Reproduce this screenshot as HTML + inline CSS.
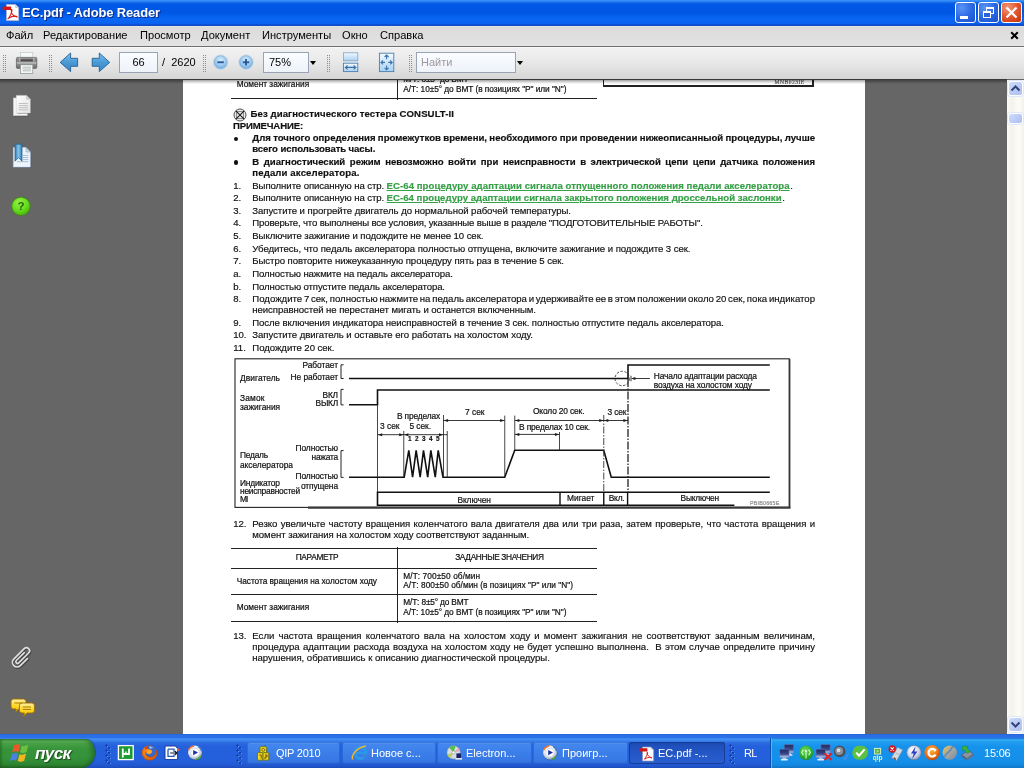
<!DOCTYPE html>
<html>
<head>
<meta charset="utf-8">
<title>EC.pdf - Adobe Reader</title>
<style>
*{box-sizing:border-box;margin:0;padding:0}
html,body{width:1024px;height:768px;overflow:hidden;background:#666;font-family:"Liberation Sans",sans-serif;-webkit-font-smoothing:antialiased;}
body>*{will-change:transform}
.abs{position:absolute}
svg{overflow:visible}
#titlebar{position:absolute;left:0;top:0;width:1024px;height:26px;
 background:linear-gradient(to bottom,#3a96ff 0%,#2d86f6 5%,#0d62e4 11%,#0058e6 18%,#0057e3 50%,#0560ee 62%,#0b66f4 75%,#0a62f0 90%,#0852dc 94%,#0340b8 97.5%,#5a78d0 100%);}
#title{position:absolute;left:22px;top:4px;color:#fff;font-weight:bold;font-size:13px;line-height:18px;white-space:nowrap;text-shadow:1px 1px 0 #0a2a8a;letter-spacing:-0.15px}
.wbtn{position:absolute;top:2px;width:21px;height:21px;border:1px solid #fff;border-radius:3px;
 background:radial-gradient(circle at 30% 25%,#5a94f4 0%,#2a66e2 55%,#1a4fcf 100%);}
#bclose{background:radial-gradient(circle at 30% 25%,#f09a7a 0%,#e2562e 50%,#c5330c 100%);}
#menubar{position:absolute;left:0;top:26px;width:1024px;height:21px;background:linear-gradient(to bottom,#e8e6ea 0,#dddcdc 6%,#dedede 50%,#e3e3e3 100%);border-bottom:1px solid #707070;}
.mi{position:absolute;top:28.4px;font-size:11.1px;line-height:14px;color:#000;white-space:nowrap}
#toolbar{position:absolute;left:0;top:47px;width:1024px;height:32px;background:linear-gradient(to bottom,#f1f1f1 0%,#ebebeb 35%,#e0e0e0 70%,#d5d5d5 100%);border-top:1px solid #f8f8f8;}
#tbshadow{position:absolute;left:0;top:79px;width:1007px;height:5px;background:linear-gradient(to bottom,rgba(0,0,0,.5) 0,rgba(0,0,0,.34) 25%,rgba(0,0,0,.2) 50%,rgba(0,0,0,.08) 78%,rgba(0,0,0,0) 100%);}
.tbox{position:absolute;top:52px;height:21px;border:1px solid #98a4b4;background:linear-gradient(to bottom,#fafcff,#eef3fa);font-size:11px;line-height:19px;color:#000;white-space:nowrap}
.grip{position:absolute;top:55px;width:4px;height:17px;background-image:linear-gradient(to right,#8e8e8e 0,#8e8e8e 1px,transparent 1px,transparent 2.5px,#8e8e8e 2.5px,#8e8e8e 3.5px,transparent 3.5px);-webkit-mask-image:repeating-linear-gradient(to bottom,#000 0,#000 1px,transparent 1px,transparent 2px);}
.tt{position:absolute;font-size:11px;line-height:14px;white-space:nowrap;color:#000}
.dd{position:absolute;width:0;height:0;border-left:3.5px solid transparent;border-right:3.5px solid transparent;border-top:4px solid #000}
#main{position:absolute;left:0;top:80px;width:1007px;height:654px;background:#666;overflow:hidden}
#page{position:absolute;left:183px;top:0;width:682px;height:654px;background:#fff;}
.t{position:absolute;white-space:pre;color:#101010;margin-top:-80px;-webkit-text-stroke-width:0.16px}
.lnk{text-decoration:underline;text-decoration-thickness:1px;text-underline-offset:1.2px}
.hl{position:absolute;height:1.2px;background:#222;margin-top:-80px}
.vl{position:absolute;width:1.2px;background:#222;margin-top:-80px}
#vscroll{position:absolute;left:1007px;top:80px;width:17px;height:654px;background:linear-gradient(to right,#fbfbf6,#f4f3ea 30%,#fdfdf9 70%,#f3f2ea);}
.sbtn{position:absolute;left:1008px;width:15px;height:15px;border:1px solid #fff;border-radius:3px;background:linear-gradient(135deg,#cfdcfb,#b8c9f5 60%,#aebff0);box-shadow:0 0 0 1px #dfe7fb}
#wbottom{position:absolute;left:0;top:734px;width:1024px;height:4px;background:linear-gradient(to bottom,#2360d2 0,#2a6ee6 30%,#2b71e9 100%);}
#taskbar{position:absolute;left:0;top:738px;width:1024px;height:30px;
 background:linear-gradient(to bottom,#3a84ee 0%,#418cf2 5%,#3a82ec 9%,#2b6ae0 16%,#2560dc 28%,#2560dc 75%,#2259d2 90%,#1c4cbc 100%);}
#start{position:absolute;left:0;top:739px;width:95px;height:29px;border-radius:0 10px 14px 0/0 14px 16px 0;
 background:linear-gradient(to bottom,#3c8a3c 0%,#5cae5a 7%,#46a044 16%,#37943a 35%,#35923a 65%,#2e8532 88%,#246c28 100%);box-shadow:1px 0 1px #1d48a8, inset -3px 0 4px rgba(20,80,20,.5), inset 2px 0 2px rgba(20,80,20,.35)}
#startt{position:absolute;left:34.5px;top:742.3px;font-size:17.2px;line-height:22px;font-weight:bold;font-style:italic;color:#fff;text-shadow:1px 1px 1px #1a4a1a;letter-spacing:-0.7px}
#tray{position:absolute;left:770px;top:738px;width:254px;height:30px;
 background:linear-gradient(to bottom,#1a72d0 0%,#35abf5 6%,#1f9bf0 14%,#1592ec 30%,#1590ea 70%,#138ae2 88%,#0f76c8 100%);border-left:1px solid #0e50b0;box-shadow:inset 1px 0 0 #4ab8f8}
.tk{position:absolute;top:742px;height:22px;border-radius:3px;background:linear-gradient(to bottom,#6aa4f4 0%,#4387ee 10%,#3b7ee9 50%,#3878e4 85%,#2f6cd8 100%);box-shadow:inset 0 0 0 1px rgba(30,90,200,.55);color:#fff;font-size:11px;line-height:22px;white-space:nowrap;overflow:hidden}
.tk b{position:absolute;left:29px;top:0;font-weight:normal}
.tk.act{background:linear-gradient(to bottom,#1a45a8 0%,#1f4fba 15%,#2558c8 60%,#2a5ed0 100%);box-shadow:inset 0 0 0 1px #173d98}
.ql{position:absolute;top:744px;width:18px;height:18px}
.dots{position:absolute;top:744px;width:6px;height:20px;background-image:radial-gradient(circle at 1.5px 1.5px,#1840b0 1px,transparent 1.4px),radial-gradient(circle at 4.2px 4px,#1840b0 1px,transparent 1.4px),radial-gradient(circle at 2.3px 2.3px,#5a98f4 0.9px,transparent 1.3px),radial-gradient(circle at 5px 4.8px,#5a98f4 0.9px,transparent 1.3px);background-size:6px 5px}
.ti{position:absolute;top:745px;width:16px;height:16px}
</style>
</head>
<body>
<!-- TITLE BAR -->
<div id="titlebar"></div>
<svg class="abs" style="left:2px;top:3px" width="20" height="20" viewBox="0 0 20 20">
<path d="M4.5 1.6 H13.6 L16.6 4.6 V17.6 H4.5 Z" fill="#fff" stroke="#b8b8c8" stroke-width="0.7"/>
<path d="M13.6 1.6 V4.6 H16.6 Z" fill="#d8d8e0" stroke="#a8a8b8" stroke-width="0.5"/>
<rect x="0.6" y="3.4" width="8.6" height="3.6" rx="0.6" fill="#d41818"/>
<path d="M6.6 15.2 C8.4 12.6 9.8 9.6 10 7.4 C10.1 6.4 9.2 6.4 9.2 7.5 C9.4 10 11.6 13 14.4 14 C15.4 14.3 15.4 13.3 14.2 13.2 C11.6 13 8.6 13.8 6.4 15.4 C5.6 16 6 16 6.6 15.2 Z" fill="none" stroke="#d42020" stroke-width="1.1"/>
</svg>
<div id="title">EC.pdf - Adobe Reader</div>
<div class="wbtn" id="bmin" style="left:955px"><i class="abs" style="left:4px;top:13px;width:8px;height:3px;background:#fff"></i></div>
<div class="wbtn" id="bmax" style="left:978px"><i class="abs" style="left:7px;top:4px;width:8px;height:7px;border:1px solid #fff;border-top-width:2px"></i><i class="abs" style="left:4px;top:8px;width:8px;height:7px;border:1px solid #fff;border-top-width:2px;background:#2a62dc"></i></div>
<div class="wbtn" id="bclose" style="left:1001px"><svg class="abs" style="left:0;top:0" width="19" height="19"><path d="M4.5 4.5 L14.5 14.5 M14.5 4.5 L4.5 14.5" stroke="#fff" stroke-width="2.2" stroke-linecap="butt"/></svg></div>
<!-- MENU -->
<div id="menubar"></div>
<div class="mi" style="left:6px">Файл</div>
<div class="mi" style="left:43px">Редактирование</div>
<div class="mi" style="left:140px">Просмотр</div>
<div class="mi" style="left:201px">Документ</div>
<div class="mi" style="left:262px">Инструменты</div>
<div class="mi" style="left:342px">Окно</div>
<div class="mi" style="left:380px">Справка</div>
<svg class="abs" style="left:1010px;top:31px" width="9" height="9"><path d="M1.2 1.2 L7.8 7.8 M7.8 1.2 L1.2 7.8" stroke="#000" stroke-width="2"/></svg>
<!-- TOOLBAR -->
<div id="toolbar"></div>
<div class="grip" style="left:3px"></div>
<div class="grip" style="left:49px"></div>
<div class="grip" style="left:203px"></div>
<div class="grip" style="left:327px"></div>
<div class="grip" style="left:409px"></div>
<svg class="abs" style="left:0;top:46px" width="540" height="34" viewBox="0 46 540 34">
<defs>
<linearGradient id="gArr" x1="0" y1="0" x2="0" y2="1"><stop offset="0" stop-color="#7fc0ee"/><stop offset="0.5" stop-color="#4a9ad6"/><stop offset="1" stop-color="#3a86c6"/></linearGradient>
<linearGradient id="gPr" x1="0" y1="0" x2="0" y2="1"><stop offset="0" stop-color="#9a9a9a"/><stop offset="0.35" stop-color="#777"/><stop offset="0.5" stop-color="#c8c8c8"/><stop offset="0.62" stop-color="#8a8a8a"/><stop offset="1" stop-color="#6a6a6a"/></linearGradient>
<radialGradient id="gZ" cx="0.5" cy="0.35" r="0.7"><stop offset="0" stop-color="#d8eefc"/><stop offset="0.55" stop-color="#9ccaf0"/><stop offset="1" stop-color="#6aa6dc"/></radialGradient>
<linearGradient id="gFit" x1="0" y1="0" x2="0" y2="1"><stop offset="0" stop-color="#f4faff"/><stop offset="1" stop-color="#a8d0f2"/></linearGradient>
</defs>
<!-- printer -->
<rect x="20.6" y="52.4" width="12.2" height="7.4" fill="#f4f8f6" stroke="#b8c0c0" stroke-width="0.6"/>
<rect x="16.4" y="57.4" width="20.4" height="11" rx="1.2" fill="url(#gPr)" stroke="#5a5a5a" stroke-width="0.7"/>
<rect x="20" y="59.4" width="13.4" height="1.8" fill="#4e4a4a"/>
<rect x="18.8" y="57.6" width="1.8" height="4" fill="#c8c8c8" opacity=".6"/><rect x="32.8" y="57.6" width="1.8" height="4" fill="#c8c8c8" opacity=".6"/>
<rect x="20.4" y="64.8" width="12.4" height="8.6" fill="#f2f6f4" stroke="#8a9090" stroke-width="0.7"/>
<path d="M22.6 67.2 H31 M22.6 69 H31 M22.6 70.8 H31" stroke="#a8b0ae" stroke-width="0.8"/>
<!-- arrows -->
<path d="M60.2 62.4 L70.6 53 L70.6 58.3 L77.6 58.3 L77.6 66.3 L70.6 66.3 L70.6 71.6 Z" fill="url(#gArr)" stroke="#1f5f92" stroke-width="0.9" stroke-linejoin="round"/>
<path d="M109.7 62.4 L99.3 53 L99.3 58.3 L92.2 58.3 L92.2 66.3 L99.3 66.3 L99.3 71.6 Z" fill="url(#gArr)" stroke="#1f5f92" stroke-width="0.9" stroke-linejoin="round"/>
<!-- zoom out / in -->
<circle cx="220.6" cy="62.2" r="6.6" fill="url(#gZ)" stroke="#8ab4d8" stroke-width="1"/>
<circle cx="220.6" cy="62.2" r="7.4" fill="none" stroke="#c4d8ea" stroke-width="0.7"/>
<rect x="217.4" y="61.3" width="6.4" height="1.9" fill="#2a5a9a"/>
<circle cx="246" cy="62.2" r="6.6" fill="url(#gZ)" stroke="#8ab4d8" stroke-width="1"/>
<circle cx="246" cy="62.2" r="7.4" fill="none" stroke="#c4d8ea" stroke-width="0.7"/>
<rect x="242.8" y="61.3" width="6.4" height="1.9" fill="#2a5a9a"/><rect x="245.05" y="59" width="1.9" height="6.4" fill="#2a5a9a"/>
<!-- fit width -->
<rect x="343.4" y="52.8" width="14.4" height="8" fill="url(#gFit)" stroke="#7aa4cc" stroke-width="0.8"/>
<rect x="343.4" y="63.2" width="14.4" height="8.4" fill="url(#gFit)" stroke="#4a7eb2" stroke-width="0.9"/>
<path d="M345.4 67.4 H355.8 M347.6 65.4 L345.4 67.4 L347.6 69.4 M353.6 65.4 L355.8 67.4 L353.6 69.4" fill="none" stroke="#3a6ea2" stroke-width="1.1"/>
<!-- fit page -->
<rect x="379.4" y="53.2" width="14.4" height="18.4" fill="url(#gFit)" stroke="#4a7eb2" stroke-width="0.9"/>
<path d="M386.6 55 V59.2 M384.6 57 L386.6 55 L388.6 57 M386.6 69.8 V65.6 M384.6 67.8 L386.6 69.8 L388.6 67.8 M381 62.4 H385 M383 60.4 L381 62.4 L383 64.4 M392.2 62.4 H388.2 M390.2 60.4 L392.2 62.4 L390.2 64.4" fill="none" stroke="#3a74ac" stroke-width="1.1"/>
</svg>
<div class="tbox" style="left:119px;width:39px;text-align:center">66</div>
<div class="tt" style="left:162px;top:55px">/&nbsp; 2620</div>
<div class="tbox" style="left:263px;width:46px;padding-left:5px">75%</div>
<div class="dd" style="left:310px;top:61px"></div>
<div class="tbox" style="left:416px;width:100px;padding-left:4px;color:#a09a9a">Найти</div>
<div class="dd" style="left:517px;top:61px"></div>
<!-- MAIN -->
<div id="main">
<div id="page"></div>
<!-- top cut-off table -->
<div class="hl" style="left:231px;top:98px;width:366px"></div>
<div class="vl" style="left:397px;top:78px;height:22px"></div>
<!-- top right box -->
<div class="abs" style="left:603px;top:-20px;width:211px;height:26.5px;border:1px solid #222;border-right-width:2px;border-bottom-width:2px"></div>
<!-- bottom table -->
<div class="hl" style="left:231px;top:548px;width:366px"></div>
<div class="hl" style="left:231px;top:567.6px;width:366px"></div>
<div class="hl" style="left:231px;top:593.7px;width:366px"></div>
<div class="hl" style="left:231px;top:620.8px;width:366px"></div>
<div class="vl" style="left:397px;top:547px;height:76px"></div>
<!-- bullets -->
<div class="abs" style="left:233.5px;top:56.9px;width:4.2px;height:4.2px;border-radius:50%;background:#111"></div>
<div class="abs" style="left:233.5px;top:80.4px;width:4.2px;height:4.2px;border-radius:50%;background:#111"></div>
<!-- no-consult icon -->
<svg class="abs" style="left:232.5px;top:27.5px" width="14" height="14" viewBox="0 0 14 14"><circle cx="7" cy="7" r="6" fill="#e8e8e8" stroke="#555" stroke-width="1"/><rect x="3.6" y="3.6" width="6.8" height="6.8" fill="none" stroke="#777" stroke-width="0.8"/><path d="M2.8 2.8 L11.2 11.2 M11.2 2.8 L2.8 11.2" stroke="#222" stroke-width="1.2"/></svg>
<!--LINES_END-->
<svg class="abs" style="left:0;top:-80px" width="1024" height="768" viewBox="0 0 1024 768">
<rect x="235" y="358.8" width="554.3" height="148.6" fill="none" stroke="#222" stroke-width="1.1"/>
<line x1="789.6" y1="359" x2="789.6" y2="508.2" stroke="#333" stroke-width="1.6" />
<line x1="308" y1="507.6" x2="790.4" y2="507.6" stroke="#3a3a3a" stroke-width="2.2" />
<path d="M343.6 364.8 H341 V378.5 H343.6" fill="none" stroke="#222" stroke-width="1"/>
<path d="M343.6 389.4 H341 V404.9 H343.6" fill="none" stroke="#222" stroke-width="1"/>
<path d="M343.6 450.6 H341 V477.4 H343.6" fill="none" stroke="#222" stroke-width="1"/>
<path d="M349 378.5 H628 V365 H769.8" fill="none" stroke="#111" stroke-width="1.6"/>
<path d="M349 404.8 H377.5 V390 H769.8" fill="none" stroke="#111" stroke-width="1.6"/>
<line x1="377.5" y1="405" x2="377.5" y2="492" stroke="#333" stroke-width="0.9" />
<polyline points="349,477.2 404.2,477.2 408.8,450.3 412.6,477.2 416.15000000000003,450.3 420.15000000000003,477.2 423.5,450.3 427.70000000000005,477.2 430.85,450.3 435.25,477.2 438.2,450.3 443,477.2 504.75,477.2 514.75,450.2 603.75,450.2 611.25,477.2 769.8,477.2" fill="none" stroke="#111" stroke-width="1.6" stroke-linejoin="miter"/>
<path d="M769.8 492.3 H377.5 V505.3 H734.4" fill="none" stroke="#111" stroke-width="1.6"/>
<line x1="560" y1="492.3" x2="560" y2="505.3" stroke="#111" stroke-width="1.4" />
<line x1="603.75" y1="492.3" x2="603.75" y2="505.3" stroke="#111" stroke-width="1.4" />
<line x1="627.6" y1="492.3" x2="627.6" y2="505.3" stroke="#111" stroke-width="1.4" />
<line x1="403.75" y1="431" x2="403.75" y2="477" stroke="#333" stroke-width="0.9" />
<line x1="443.5" y1="415" x2="443.5" y2="477" stroke="#333" stroke-width="0.9" />
<line x1="447.25" y1="431" x2="447.25" y2="477" stroke="#333" stroke-width="0.9" />
<line x1="504.75" y1="415.6" x2="504.75" y2="477" stroke="#333" stroke-width="0.9" />
<line x1="514.75" y1="415.6" x2="514.75" y2="450" stroke="#333" stroke-width="0.9" />
<line x1="559.5" y1="432" x2="559.5" y2="450" stroke="#333" stroke-width="0.9" />
<line x1="603.75" y1="415" x2="603.75" y2="492" stroke="#333" stroke-width="0.9" stroke-dasharray="7 1.5 1.5 1.5"/>
<line x1="628" y1="379" x2="628" y2="492" stroke="#222" stroke-width="1.3" stroke-dasharray="8 1.5 1.5 1.5"/>
<line x1="377.5" y1="434.7" x2="447.25" y2="434.7" stroke="#222" stroke-width="0.9" />
<path d="M378 434.7 L382.2 433.2 L382.2 436.2 Z" fill="#1a1a1a"/>
<path d="M403.4 434.7 L399.2 433.2 L399.2 436.2 Z" fill="#1a1a1a"/>
<path d="M404.2 434.7 L408.4 433.2 L408.4 436.2 Z" fill="#1a1a1a"/>
<path d="M443.2 434.7 L439.0 433.2 L439.0 436.2 Z" fill="#1a1a1a"/>
<line x1="443.5" y1="420.5" x2="504.75" y2="420.5" stroke="#222" stroke-width="0.9" />
<path d="M443.9 420.5 L448.09999999999997 419.0 L448.09999999999997 422.0 Z" fill="#1a1a1a"/>
<path d="M504.4 420.5 L500.2 419.0 L500.2 422.0 Z" fill="#1a1a1a"/>
<line x1="514.75" y1="420.5" x2="628" y2="420.5" stroke="#222" stroke-width="0.9" />
<path d="M515.1 420.5 L519.3000000000001 419.0 L519.3000000000001 422.0 Z" fill="#1a1a1a"/>
<path d="M603.4 420.5 L599.1999999999999 419.0 L599.1999999999999 422.0 Z" fill="#1a1a1a"/>
<path d="M604.1 420.5 L608.3000000000001 419.0 L608.3000000000001 422.0 Z" fill="#1a1a1a"/>
<path d="M627.6 420.5 L623.4 419.0 L623.4 422.0 Z" fill="#1a1a1a"/>
<line x1="514.75" y1="434.4" x2="559.5" y2="434.4" stroke="#222" stroke-width="0.9" />
<path d="M515.1 434.4 L519.3000000000001 432.9 L519.3000000000001 435.9 Z" fill="#1a1a1a"/>
<path d="M559.1 434.4 L554.9 432.9 L554.9 435.9 Z" fill="#1a1a1a"/>
<circle cx="622.2" cy="378.5" r="7.2" fill="none" stroke="#333" stroke-width="0.9" stroke-dasharray="2.4 1.6"/>
<line x1="634" y1="378.5" x2="649.8" y2="378.5" stroke="#222" stroke-width="0.9" />
<path d="M631.2 378.5 L635.4000000000001 377.0 L635.4000000000001 380.0 Z" fill="#1a1a1a"/>
<line x1="631" y1="375.8" x2="631" y2="381.2" stroke="#222" stroke-width="0.9" />
</svg>
<div class="t" style="left:236.75px;top:78.92px;font-size:8.3px;line-height:11px;-webkit-text-stroke-width:0.2px;">Момент зажигания</div>
<div class="t" style="left:403.30px;top:73.62px;font-size:8.3px;line-height:11px;letter-spacing:-0.153px;-webkit-text-stroke-width:0.2px;">М/Т: 8±5° до ВМТ</div>
<div class="t" style="left:403.30px;top:84.42px;font-size:8.3px;line-height:11px;letter-spacing:-0.050px;-webkit-text-stroke-width:0.2px;">А/Т: 10±5° до ВМТ (в позициях "P" или "N")</div>
<div class="t" style="left:774.50px;top:77.56px;font-size:5.6px;line-height:8px;color:#555;letter-spacing:0.477px;font-family:'Liberation Serif';">MNB023IE</div>
<div class="t" style="left:250.50px;top:107.17px;font-size:9.6px;line-height:13px;font-weight:bold;letter-spacing:0.084px;">Без диагностического тестера CONSULT-II</div>
<div class="t" style="left:233.00px;top:118.77px;font-size:9.6px;line-height:13px;font-weight:bold;letter-spacing:-0.159px;">ПРИМЕЧАНИЕ:</div>
<div class="t" style="left:252.30px;top:131.07px;font-size:9.6px;line-height:13px;font-weight:bold;word-spacing:-0.327px;">Для точного определения промежутков времени, необходимого при проведении нижеописанныой процедуры, лучше</div>
<div class="t" style="left:252.30px;top:142.17px;font-size:9.6px;line-height:13px;font-weight:bold;letter-spacing:-0.095px;">всего использовать часы.</div>
<div class="t" style="left:252.30px;top:154.67px;font-size:9.6px;line-height:13px;font-weight:bold;word-spacing:1.886px;">В диагностический режим невозможно войти при неисправности в электрической цепи цепи датчика положения</div>
<div class="t" style="left:252.30px;top:166.17px;font-size:9.6px;line-height:13px;font-weight:bold;letter-spacing:0.123px;">педали акселератора.</div>
<div class="t" style="left:233.20px;top:178.97px;font-size:9.6px;line-height:13px;">1.</div>
<div class="t" style="left:233.20px;top:191.17px;font-size:9.6px;line-height:13px;">2.</div>
<div class="t" style="left:233.20px;top:203.92px;font-size:9.6px;line-height:13px;">3.</div>
<div class="t" style="left:233.20px;top:216.17px;font-size:9.6px;line-height:13px;">4.</div>
<div class="t" style="left:233.20px;top:228.67px;font-size:9.6px;line-height:13px;">5.</div>
<div class="t" style="left:233.20px;top:241.67px;font-size:9.6px;line-height:13px;">6.</div>
<div class="t" style="left:233.20px;top:253.57px;font-size:9.6px;line-height:13px;">7.</div>
<div class="t" style="left:233.20px;top:266.97px;font-size:9.6px;line-height:13px;">a.</div>
<div class="t" style="left:233.20px;top:279.67px;font-size:9.6px;line-height:13px;">b.</div>
<div class="t" style="left:233.20px;top:291.77px;font-size:9.6px;line-height:13px;">8.</div>
<div class="t" style="left:233.20px;top:315.87px;font-size:9.6px;line-height:13px;">9.</div>
<div class="t" style="left:233.20px;top:328.07px;font-size:9.6px;line-height:13px;">10.</div>
<div class="t" style="left:233.20px;top:340.87px;font-size:9.6px;line-height:13px;">11.</div>
<div class="t" style="left:233.20px;top:516.67px;font-size:9.6px;line-height:13px;">12.</div>
<div class="t" style="left:233.20px;top:629.17px;font-size:9.6px;line-height:13px;">13.</div>
<div class="t" style="left:252.30px;top:178.97px;font-size:9.6px;line-height:13px;letter-spacing:-0.077px;">Выполните описанную на стр.</div>
<div class="t lnk" style="left:386.60px;top:178.97px;font-size:9.6px;line-height:13px;font-weight:bold;color:#35a046;letter-spacing:0.054px;">EC-64 процедуру адаптации сигнала отпущенного положения педали акселератора</div>
<div class="t" style="left:790.20px;top:178.97px;font-size:9.6px;line-height:13px;">.</div>
<div class="t" style="left:252.30px;top:191.17px;font-size:9.6px;line-height:13px;letter-spacing:-0.077px;">Выполните описанную на стр.</div>
<div class="t lnk" style="left:386.60px;top:191.17px;font-size:9.6px;line-height:13px;font-weight:bold;color:#35a046;letter-spacing:0.021px;">EC-64 процедуру адаптации сигнала закрытого положения дроссельной заслонки</div>
<div class="t" style="left:782.20px;top:191.17px;font-size:9.6px;line-height:13px;">.</div>
<div class="t" style="left:252.30px;top:203.92px;font-size:9.6px;line-height:13px;letter-spacing:-0.055px;">Запустите и прогрейте двигатель до нормальной рабочей температуры.</div>
<div class="t" style="left:252.30px;top:216.17px;font-size:9.6px;line-height:13px;letter-spacing:-0.158px;">Проверьте, что выполнены все условия, указанные выше в разделе "ПОДГОТОВИТЕЛЬНЫЕ РАБОТЫ".</div>
<div class="t" style="left:252.30px;top:228.67px;font-size:9.6px;line-height:13px;letter-spacing:-0.075px;">Выключите зажигание и подождите не менее 10 сек.</div>
<div class="t" style="left:252.30px;top:241.67px;font-size:9.6px;line-height:13px;letter-spacing:-0.066px;">Убедитесь, что педаль акселератора полностью отпущена, включите зажигание и подождите 3 сек.</div>
<div class="t" style="left:252.30px;top:253.57px;font-size:9.6px;line-height:13px;letter-spacing:-0.065px;">Быстро повторите нижеуказанную процедуру пять раз в течение 5 сек.</div>
<div class="t" style="left:252.30px;top:266.97px;font-size:9.6px;line-height:13px;letter-spacing:-0.117px;">Полностью нажмите на педаль акселератора.</div>
<div class="t" style="left:252.30px;top:279.67px;font-size:9.6px;line-height:13px;letter-spacing:-0.106px;">Полностью отпустите педаль акселератора.</div>
<div class="t" style="left:252.30px;top:291.77px;font-size:9.6px;line-height:13px;word-spacing:-0.910px;">Подождите 7 сек, полностью нажмите на педаль акселератора и удерживайте ее в этом положении около 20 сек, пока индикатор</div>
<div class="t" style="left:252.30px;top:303.17px;font-size:9.6px;line-height:13px;letter-spacing:-0.068px;">неисправностей не перестанет мигать и останется включенным.</div>
<div class="t" style="left:252.30px;top:315.87px;font-size:9.6px;line-height:13px;letter-spacing:-0.077px;">После включения индикатора неисправностей в течение 3 сек. полностью отпустите педаль акселератора.</div>
<div class="t" style="left:252.30px;top:328.07px;font-size:9.6px;line-height:13px;letter-spacing:-0.045px;">Запустите двигатель и оставьте его работать на холостом ходу.</div>
<div class="t" style="left:252.30px;top:340.87px;font-size:9.6px;line-height:13px;letter-spacing:-0.045px;">Подождите 20 сек.</div>
<div class="t" style="left:252.30px;top:516.67px;font-size:9.6px;line-height:13px;word-spacing:0.554px;">Резко увеличьте частоту вращения коленчатого вала двигателя два или три раза, затем проверьте, что частота вращения и</div>
<div class="t" style="left:252.30px;top:527.77px;font-size:9.6px;line-height:13px;letter-spacing:-0.055px;">момент зажигания на холостом ходу соответствуют заданным.</div>
<div class="t" style="left:252.30px;top:629.17px;font-size:9.6px;line-height:13px;word-spacing:1.473px;">Если частота вращения коленчатого вала на холостом ходу и момент зажигания не соответствуют заданным величинам,</div>
<div class="t" style="left:252.30px;top:640.17px;font-size:9.6px;line-height:13px;word-spacing:0.586px;">процедура адаптации расхода воздуха на холостом ходу не будет успешно выполнена.  В этом случае определите причину</div>
<div class="t" style="left:252.30px;top:650.67px;font-size:9.6px;line-height:13px;letter-spacing:-0.030px;">нарушения, обратившись к описанию диагностической процедуры.</div>
<div class="t" style="left:295.75px;top:552.12px;font-size:8.3px;line-height:11px;letter-spacing:-0.342px;-webkit-text-stroke-width:0.2px;">ПАРАМЕТР</div>
<div class="t" style="left:455.20px;top:552.12px;font-size:8.3px;line-height:11px;letter-spacing:-0.330px;-webkit-text-stroke-width:0.2px;">ЗАДАННЫЕ ЗНАЧЕНИЯ</div>
<div class="t" style="left:236.75px;top:575.62px;font-size:8.3px;line-height:11px;letter-spacing:-0.040px;-webkit-text-stroke-width:0.2px;">Частота вращения на холостом ходу</div>
<div class="t" style="left:403.30px;top:571.42px;font-size:8.3px;line-height:11px;letter-spacing:0.084px;-webkit-text-stroke-width:0.2px;">М/Т: 700±50 об/мин</div>
<div class="t" style="left:403.30px;top:580.12px;font-size:8.3px;line-height:11px;letter-spacing:0.033px;-webkit-text-stroke-width:0.2px;">А/Т: 800±50 об/мин (в позициях "P" или "N")</div>
<div class="t" style="left:236.75px;top:601.82px;font-size:8.3px;line-height:11px;-webkit-text-stroke-width:0.2px;">Момент зажигания</div>
<div class="t" style="left:403.30px;top:596.62px;font-size:8.3px;line-height:11px;letter-spacing:-0.153px;-webkit-text-stroke-width:0.2px;">М/Т: 8±5° до ВМТ</div>
<div class="t" style="left:403.30px;top:606.62px;font-size:8.3px;line-height:11px;letter-spacing:-0.050px;-webkit-text-stroke-width:0.2px;">А/Т: 10±5° до ВМТ (в позициях "P" или "N")</div>
<div class="t" style="left:302.50px;top:359.89px;font-size:8.4px;line-height:11px;letter-spacing:-0.048px;-webkit-text-stroke-width:0.2px;">Работает</div>
<div class="t" style="left:290.60px;top:372.39px;font-size:8.4px;line-height:11px;letter-spacing:-0.079px;-webkit-text-stroke-width:0.2px;">Не работает</div>
<div class="t" style="left:240.00px;top:372.99px;font-size:8.4px;line-height:11px;letter-spacing:0.057px;-webkit-text-stroke-width:0.2px;">Двигатель</div>
<div class="t" style="left:240.00px;top:392.99px;font-size:8.4px;line-height:11px;letter-spacing:0.134px;-webkit-text-stroke-width:0.2px;">Замок</div>
<div class="t" style="left:240.00px;top:401.79px;font-size:8.4px;line-height:11px;-webkit-text-stroke-width:0.2px;">зажигания</div>
<div class="t" style="left:322.50px;top:390.39px;font-size:8.4px;line-height:11px;letter-spacing:-0.188px;-webkit-text-stroke-width:0.2px;">ВКЛ</div>
<div class="t" style="left:315.60px;top:397.59px;font-size:8.4px;line-height:11px;letter-spacing:-0.279px;-webkit-text-stroke-width:0.2px;">ВЫКЛ</div>
<div class="t" style="left:295.60px;top:442.99px;font-size:8.4px;line-height:11px;letter-spacing:-0.111px;-webkit-text-stroke-width:0.2px;">Полностью</div>
<div class="t" style="left:311.50px;top:452.14px;font-size:8.4px;line-height:11px;letter-spacing:-0.230px;-webkit-text-stroke-width:0.2px;">нажата</div>
<div class="t" style="left:240.00px;top:449.89px;font-size:8.4px;line-height:11px;letter-spacing:-0.236px;-webkit-text-stroke-width:0.2px;">Педаль</div>
<div class="t" style="left:240.00px;top:459.89px;font-size:8.4px;line-height:11px;letter-spacing:-0.033px;-webkit-text-stroke-width:0.2px;">акселератора</div>
<div class="t" style="left:295.60px;top:470.89px;font-size:8.4px;line-height:11px;letter-spacing:-0.111px;-webkit-text-stroke-width:0.2px;">Полностью</div>
<div class="t" style="left:301.00px;top:481.14px;font-size:8.4px;line-height:11px;letter-spacing:-0.104px;-webkit-text-stroke-width:0.2px;">отпущена</div>
<div class="t" style="left:240.00px;top:477.64px;font-size:8.4px;line-height:11px;letter-spacing:-0.217px;-webkit-text-stroke-width:0.2px;">Индикатор</div>
<div class="t" style="left:240.00px;top:485.89px;font-size:8.4px;line-height:11px;letter-spacing:-0.222px;-webkit-text-stroke-width:0.2px;">неисправностей</div>
<div class="t" style="left:240.00px;top:493.89px;font-size:8.4px;line-height:11px;letter-spacing:-0.875px;-webkit-text-stroke-width:0.2px;">MI</div>
<div class="t" style="left:397.00px;top:410.89px;font-size:8.4px;line-height:11px;letter-spacing:-0.166px;-webkit-text-stroke-width:0.2px;">В пределах</div>
<div class="t" style="left:380.00px;top:421.14px;font-size:8.4px;line-height:11px;-webkit-text-stroke-width:0.2px;">3 сек</div>
<div class="t" style="left:409.40px;top:421.14px;font-size:8.4px;line-height:11px;letter-spacing:-0.041px;-webkit-text-stroke-width:0.2px;">5 сек.</div>
<div class="t" style="left:408.00px;top:433.58px;font-size:6.4px;line-height:9px;font-weight:bold;letter-spacing:0.838px;">1 2 3 4 5</div>
<div class="t" style="left:465.00px;top:406.79px;font-size:8.4px;line-height:11px;-webkit-text-stroke-width:0.2px;">7 сек</div>
<div class="t" style="left:533.00px;top:406.14px;font-size:8.4px;line-height:11px;letter-spacing:-0.144px;-webkit-text-stroke-width:0.2px;">Около 20 сек.</div>
<div class="t" style="left:519.00px;top:422.14px;font-size:8.4px;line-height:11px;letter-spacing:-0.137px;-webkit-text-stroke-width:0.2px;">В пределах 10 сек.</div>
<div class="t" style="left:607.50px;top:407.39px;font-size:8.4px;line-height:11px;letter-spacing:-0.167px;-webkit-text-stroke-width:0.2px;">3 сек</div>
<div class="t" style="left:653.75px;top:371.14px;font-size:8.4px;line-height:11px;letter-spacing:-0.153px;-webkit-text-stroke-width:0.2px;">Начало адаптации расхода</div>
<div class="t" style="left:653.75px;top:379.89px;font-size:8.4px;line-height:11px;letter-spacing:-0.115px;-webkit-text-stroke-width:0.2px;">воздуха на холостом ходу</div>
<div class="t" style="left:457.50px;top:494.89px;font-size:8.4px;line-height:11px;letter-spacing:-0.113px;-webkit-text-stroke-width:0.2px;">Включен</div>
<div class="t" style="left:567.00px;top:492.69px;font-size:8.4px;line-height:11px;-webkit-text-stroke-width:0.2px;">Мигает</div>
<div class="t" style="left:608.75px;top:492.69px;font-size:8.4px;line-height:11px;letter-spacing:-0.232px;-webkit-text-stroke-width:0.2px;">Вкл.</div>
<div class="t" style="left:680.60px;top:492.99px;font-size:8.4px;line-height:11px;letter-spacing:-0.213px;-webkit-text-stroke-width:0.2px;">Выключен</div>
<div class="t" style="left:750.00px;top:498.53px;font-size:5.4px;line-height:8px;color:#8a8a8a;letter-spacing:0.179px;">PBIB0665E</div>
<svg class="abs" style="left:0;top:-80px" width="64" height="768" viewBox="0 0 64 768">
<defs>
<linearGradient id="gPg" x1="0" y1="0" x2="1" y2="1"><stop offset="0" stop-color="#fff"/><stop offset="1" stop-color="#e2e2e2"/></linearGradient>
<linearGradient id="gBm" x1="0" y1="0" x2="1" y2="0"><stop offset="0" stop-color="#2f7fb8"/><stop offset="0.5" stop-color="#86c2e8"/><stop offset="1" stop-color="#2f7fb8"/></linearGradient>
<radialGradient id="gHelp" cx="0.4" cy="0.3" r="0.75"><stop offset="0" stop-color="#9af048"/><stop offset="0.6" stop-color="#66dc1c"/><stop offset="1" stop-color="#48b40c"/></radialGradient>
<linearGradient id="gCm" x1="0" y1="0" x2="0" y2="1"><stop offset="0" stop-color="#fff0a0"/><stop offset="0.5" stop-color="#ffd828"/><stop offset="1" stop-color="#f0b800"/></linearGradient>
</defs>
<!-- pages -->
<rect x="14.4" y="99.2" width="14" height="17.6" fill="#444" opacity=".35"/>
<rect x="13.4" y="98" width="14" height="17.6" fill="#f6f6f6" stroke="#d0d0d0" stroke-width="0.5"/>
<path d="M17.3 96.4 L28.2 96.4 L31.3 99.6 L31.3 114 L17.3 114 Z" fill="#555" opacity=".5"/>
<path d="M16.3 95.4 L26.6 95.4 L30.3 99.2 L30.3 113 L16.3 113 Z" fill="url(#gPg)" stroke="#cfcfcf" stroke-width="0.5"/>
<path d="M26.6 95.4 L26.6 99.2 L30.3 99.2 Z" fill="#d8d8d8" stroke="#aaa" stroke-width="0.4"/>
<path d="M18.6 103.5 H27.8 M18.6 105.6 H27.8 M18.6 107.7 H27.8 M18.6 109.8 H27.8" stroke="#b4b4b4" stroke-width="0.8"/>
<!-- bookmark -->
<path d="M14.4 148.6 L26.6 148.6 L31.3 153.4 L31.3 168 L14.4 168 Z" fill="#3a4a6a" opacity=".5"/>
<path d="M13.4 147.6 L26 147.6 L30.3 152 L30.3 167 L13.4 167 Z" fill="#eef4fc" stroke="#c4d4ea" stroke-width="0.6"/>
<path d="M26 147.6 L26 152 L30.3 152 Z" fill="#cfdcee" stroke="#7a94b8" stroke-width="0.5"/>
<path d="M23 155.4 H28.4 M23 157.5 H28.4 M23 159.6 H28.4 M17 161.7 H28.4" stroke="#9ab0cc" stroke-width="0.8"/>
<path d="M15 144.2 L22 144.2 L22 161.2 L18.5 157.6 L15 161.2 Z" fill="url(#gBm)" stroke="#23669a" stroke-width="0.8"/>
<!-- help -->
<circle cx="21" cy="206.3" r="9.6" fill="#3c8e12"/>
<circle cx="21" cy="206.2" r="8.8" fill="url(#gHelp)"/>
<text x="21" y="210.4" font-family="Liberation Sans" font-weight="bold" font-size="11.5" text-anchor="middle" fill="#1f6a08">?</text>
<!-- paperclip -->
<g transform="rotate(45 22 657.4)" fill="none" stroke-linecap="round">
<path d="M20.2 652.4 V663.6 A1.7 1.7 0 0 0 23.6 663.6 V649.6 A3.1 3.1 0 0 0 17.4 649.6 V664.4 A4.6 4.6 0 0 0 26.6 664.4 V654.4" stroke="#2c2c2c" stroke-width="2.3" opacity=".6" transform="translate(1.1,0.1)"/>
<path d="M20.2 652.4 V663.6 A1.7 1.7 0 0 0 23.6 663.6 V649.6 A3.1 3.1 0 0 0 17.4 649.6 V664.4 A4.6 4.6 0 0 0 26.6 664.4 V654.4" stroke="#dedede" stroke-width="1.7"/>
</g>
<!-- comments -->
<path d="M13.6 699 H23.4 A2.6 2.6 0 0 1 26 701.6 V706.4 A2.6 2.6 0 0 1 23.4 709 H18.6 L15.4 712.4 L16.2 709 H13.6 A2.6 2.6 0 0 1 11 706.4 V701.6 A2.6 2.6 0 0 1 13.6 699 Z" fill="url(#gCm)" stroke="#9a6c00" stroke-width="0.9"/>
<path d="M14.4 703 H22.6" stroke="#a87800" stroke-width="1"/>
<path d="M22 703 H31.8 A2.6 2.6 0 0 1 34.4 705.6 V710.4 A2.6 2.6 0 0 1 31.8 713 H27 L23.4 716.8 L24.4 713 H22 A2.6 2.6 0 0 1 19.4 710.4 V705.6 A2.6 2.6 0 0 1 22 703 Z" fill="url(#gCm)" stroke="#9a6c00" stroke-width="0.9"/>
<path d="M22.8 707 H31 M22.8 709.4 H31" stroke="#a87800" stroke-width="1"/>
</svg>
</div>
<div id="tbshadow"></div>
<div id="vscroll"></div>
<div class="sbtn" style="top:81px"><svg class="abs" style="left:0;top:0" width="13" height="13"><path d="M2.5 8.5 L6.5 4.5 L10.5 8.5" fill="none" stroke="#34457a" stroke-width="2"/></svg></div>
<div class="sbtn" style="top:113px;height:11px"></div>
<div class="sbtn" style="top:717px"><svg class="abs" style="left:0;top:0" width="13" height="13"><path d="M2.5 4.5 L6.5 8.5 L10.5 4.5" fill="none" stroke="#34457a" stroke-width="2"/></svg></div>
<!-- TASKBAR -->
<div id="wbottom"></div>
<div id="taskbar"></div>
<div id="start"></div>
<!--ICON_START-->
<div id="startt">пуск</div>
<div class="dots" style="left:105px"></div>
<!--ICONS_QL-->
<div class="dots" style="left:236px"></div>
<div class="tk" style="left:247px;width:93px"><b style="letter-spacing:-0.25px">QIP 2010</b></div>
<div class="tk" style="left:342px;width:93.5px"><b>Новое с...</b></div>
<div class="tk" style="left:437px;width:94.5px"><b>Electron...</b></div>
<div class="tk" style="left:533px;width:94.5px"><b>Проигр...</b></div>
<div class="tk act" style="left:628.5px;width:95.5px"><b>EC.pdf -...</b></div>
<!--ICONS_TASK-->
<div class="dots" style="left:729px"></div>
<div class="abs" style="left:743.5px;top:746px;color:#fff;font-size:11px;line-height:14px;letter-spacing:-0.8px">RL</div>
<div id="tray"></div>
<svg class="abs" style="left:0;top:736px" width="1024" height="32" viewBox="0 736 1024 32">
<defs>
<radialGradient id="gWmp" cx="0.45" cy="0.4" r="0.6"><stop offset="0" stop-color="#fff"/><stop offset="0.6" stop-color="#e8eef8"/><stop offset="1" stop-color="#9aa8c0"/></radialGradient>
<radialGradient id="gFx" cx="0.5" cy="0.4" r="0.6"><stop offset="0" stop-color="#ffb030"/><stop offset="0.7" stop-color="#f07a10"/><stop offset="1" stop-color="#c04a08"/></radialGradient>
<radialGradient id="gGrn" cx="0.45" cy="0.35" r="0.7"><stop offset="0" stop-color="#7ae060"/><stop offset="0.6" stop-color="#2eb030"/><stop offset="1" stop-color="#1a8a20"/></radialGradient>
<radialGradient id="gOr" cx="0.45" cy="0.35" r="0.7"><stop offset="0" stop-color="#ffb040"/><stop offset="0.6" stop-color="#f07410"/><stop offset="1" stop-color="#b84004"/></radialGradient>
<radialGradient id="gSil" cx="0.4" cy="0.35" r="0.7"><stop offset="0" stop-color="#fff"/><stop offset="0.6" stop-color="#d0d8e8"/><stop offset="1" stop-color="#8a98b8"/></radialGradient>
<linearGradient id="gMon" x1="0" y1="0" x2="0" y2="1"><stop offset="0" stop-color="#20285a"/><stop offset="0.6" stop-color="#3a4a90"/><stop offset="1" stop-color="#c8d8f8"/></linearGradient>
<linearGradient id="gSw" x1="0" y1="0" x2="1" y2="1"><stop offset="0" stop-color="#e8c050"/><stop offset="0.5" stop-color="#a8a8a0"/><stop offset="1" stop-color="#7088a8"/></linearGradient>
</defs>
<!-- start flag -->
<g transform="translate(10.6,743.4) scale(1.12) skewX(-6)">
<path d="M3.2 1.6 C5 0.4 7 0.4 8.8 1.4 L7.8 7.6 C6 6.8 4 6.9 2.2 8 Z" fill="#e85a28"/>
<path d="M10.2 1.8 C12 2.6 14 2.5 16 1.3 L15 7.6 C13 8.8 11 8.9 9.2 8 Z" fill="#6cc040"/>
<path d="M2 9.4 C3.8 8.3 5.8 8.3 7.6 9.2 L6.6 15.4 C4.8 14.5 2.8 14.6 1 15.8 Z" fill="#4a80e0"/>
<path d="M9 9.6 C10.8 10.4 12.8 10.3 14.8 9.1 L13.8 15.4 C11.8 16.6 9.8 16.7 8 15.8 Z" fill="#f0b820"/>
</g>
<!-- quick launch: utorrent-like -->
<rect x="118.4" y="745.6" width="14.8" height="14" fill="#1c9c30" stroke="#fff" stroke-width="1.3"/>
<path d="M122.8 748.4 V757.6 M122.8 754 H129 M129 748.4 V755" stroke="#fff" stroke-width="1.8" fill="none"/><path d="M125.9 751.4 V754" stroke="#fff" stroke-width="1.4"/>
<!-- firefox -->
<circle cx="149.6" cy="752.8" r="7.5" fill="#c8500c"/>
<circle cx="150.4" cy="751.2" r="5.6" fill="#3568cc"/>
<path d="M148.6 746.6 C150.6 746.2 152.6 746.8 153.4 748 C151.6 747.6 150.4 748.4 150.6 749.6 Z" fill="#9ac0f0"/>
<path d="M146 746.6 C146.6 748.4 148.6 749.4 150.6 749.8 C152.8 750.4 152.6 753 150.6 753.8 C148 754.8 145.8 753.4 145.6 751 C144.6 753.6 145.8 756.6 148.8 757.6 C152.6 758.8 156 756.4 156.8 752.6 C157.6 756.8 154 760.6 149.6 760.4 C145 760.2 141.8 756.6 142 752.4 C142.2 749.6 143.6 747.6 146 746.6 Z" fill="url(#gFx)"/>
<circle cx="146.2" cy="748.2" r="1.2" fill="#e83a18"/>
<!-- doc w/ arrow -->
<path d="M165 746 H175.4 L177.6 748.4 V759.6 H165 Z" fill="#fff" stroke="#1a3a9a" stroke-width="1"/>
<path d="M168 749.2 H174 V752 M168 749.2 V756.4 H174 V754.4" fill="none" stroke="#2a58b8" stroke-width="1.3"/>
<path d="M170.2 753 H176.6 M174.8 751 L177 753 L174.8 755" fill="none" stroke="#101830" stroke-width="1.1"/>
<circle cx="178.2" cy="749.8" r="1.2" fill="#e8684a"/>
<g transform="translate(195,752.6)"><circle r="7.2" fill="#3a4a7a" opacity=".5" cx="0.5" cy="0.6"/><circle r="7" fill="url(#gWmp)"/><path d="M-6.4 -2.4 A6.8 6.8 0 0 1 -1 -6.6" stroke="#f07028" stroke-width="1.6" fill="none"/><path d="M6 3.4 A6.8 6.8 0 0 1 1 6.7" stroke="#58a838" stroke-width="1.6" fill="none"/><path d="M3 -6.2 A6.8 6.8 0 0 1 6.6 -1.6" stroke="#4a78c8" stroke-width="1.4" fill="none"/><circle r="4.3" fill="#fff" stroke="#b8c4dc" stroke-width="0.6"/><path d="M-1.8 -2.6 L3 0 L-1.8 2.6 Z" fill="#1a30a8"/></g>
<!-- task icons -->
<g><rect x="260" y="746.6" width="6.4" height="6.6" rx="1" fill="#f0d820" stroke="#5a6a10" stroke-width="0.8"/><rect x="257.4" y="752.6" width="5.6" height="7.6" rx="1" fill="#f0d820" stroke="#5a6a10" stroke-width="0.8"/><rect x="263" y="752.6" width="5.8" height="7.6" rx="1" fill="#e8d020" stroke="#5a6a10" stroke-width="0.8"/><circle cx="263.2" cy="749.8" r="1.5" fill="none" stroke="#6a5a08" stroke-width="0.8"/><path d="M259.4 755 H261.2 V758.6 M265 755 H267 V757 H265 V759" fill="none" stroke="#7a3a08" stroke-width="0.9"/><path d="M264.6 746.8 L265.8 744.8" stroke="#3a8a20" stroke-width="1.2"/></g>
<g><circle cx="360.4" cy="753" r="5.6" fill="none" stroke="#2a9ae8" stroke-width="3"/><path d="M355.4 753 H365.6" stroke="#2a9ae8" stroke-width="2.2"/><path d="M362 757.4 L366.4 754.6 L366.4 758.6 Z" fill="#3a86d8"/><rect x="362.6" y="754.2" width="4.4" height="2.2" fill="#3c81ea"/><path d="M352.6 759.6 C351 755 357 747.4 366 746" fill="none" stroke="#f0b428" stroke-width="1.5"/></g>
<g><circle cx="453.6" cy="752.4" r="6.6" fill="#d8dce4" stroke="#9098a8" stroke-width="0.6"/><path d="M453.6 752.4 L449 747.6 A6.6 6.6 0 0 1 455.6 746.2 Z" fill="#58c048"/><path d="M453.6 752.4 L447.2 754.4 A6.6 6.6 0 0 0 450.6 758.2 Z" fill="#b8d060"/><path d="M453.6 752.4 L458.4 748 A6.6 6.6 0 0 1 460 751 Z" fill="#e8a8b8"/><circle cx="453.6" cy="752.4" r="1.5" fill="#fff" stroke="#888" stroke-width="0.5"/><rect x="456.4" y="753.4" width="4.6" height="4.8" fill="#18206a"/><rect x="455.4" y="758" width="6.6" height="1.6" fill="#e8e8f0"/></g>
<g transform="translate(550,752.6)"><circle r="7.2" fill="#3a4a7a" opacity=".5" cx="0.5" cy="0.6"/><circle r="7" fill="url(#gWmp)"/><path d="M-6.4 -2.4 A6.8 6.8 0 0 1 -1 -6.6" stroke="#f07028" stroke-width="1.6" fill="none"/><path d="M6 3.4 A6.8 6.8 0 0 1 1 6.7" stroke="#58a838" stroke-width="1.6" fill="none"/><path d="M3 -6.2 A6.8 6.8 0 0 1 6.6 -1.6" stroke="#4a78c8" stroke-width="1.4" fill="none"/><circle r="4.3" fill="#fff" stroke="#b8c4dc" stroke-width="0.6"/><path d="M-1.8 -2.6 L3 0 L-1.8 2.6 Z" fill="#1a30a8"/></g>
<g transform="translate(640,746.4)"><path d="M2.5 0.6 H10.6 L13.6 3.6 V14.6 H2.5 Z" fill="#fff" stroke="#9098b0" stroke-width="0.7"/><path d="M10.6 0.6 V3.6 H13.6 Z" fill="#d4d8e4"/><rect x="-0.8" y="1.8" width="8.2" height="3.2" rx="0.5" fill="#d41818"/><path d="M4.6 12.6 C6.2 10.4 7.4 8 7.6 6.2 C7.7 5.4 7 5.4 7 6.3 C7.2 8.4 9 10.8 11.4 11.6 C12.2 11.8 12.2 11 11.2 10.9 C9 10.8 6.4 11.4 4.5 12.8 Z" fill="none" stroke="#d42020" stroke-width="1"/></g>
<!-- tray -->
<g transform="translate(784.2,744.6) scale(1.18)"><rect x="0" y="0" width="8" height="7" rx="0.8" fill="url(#gMon)" stroke="#6a7ab8" stroke-width="0.5"/><rect x="2.4" y="7" width="3.2" height="1.4" fill="#b8c8ec"/><rect x="1" y="8.2" width="6" height="1.3" rx="0.5" fill="#e4ecfc"/></g><g transform="translate(779.6,749.2) scale(1.18)"><rect x="0" y="0" width="8" height="7" rx="0.8" fill="url(#gMon)" stroke="#6a7ab8" stroke-width="0.5"/><rect x="2.4" y="7" width="3.2" height="1.4" fill="#b8c8ec"/><rect x="1" y="8.2" width="6" height="1.3" rx="0.5" fill="#e4ecfc"/></g>
<circle cx="806" cy="752.8" r="7.2" fill="url(#gGrn)"/>
<path d="M806 751.4 V758.6 M803.4 749.6 L801.6 752.4 L803.4 755.2 M808.6 749.6 L810.4 752.4 L808.6 755.2" stroke="#d8f8d0" stroke-width="1.1" fill="none"/><circle cx="806" cy="751" r="1.1" fill="#e8ffe0"/>
<g transform="translate(820.8,744.6) scale(1.18)"><rect x="0" y="0" width="8" height="7" rx="0.8" fill="url(#gMon)" stroke="#6a7ab8" stroke-width="0.5"/><rect x="2.4" y="7" width="3.2" height="1.4" fill="#b8c8ec"/><rect x="1" y="8.2" width="6" height="1.3" rx="0.5" fill="#e4ecfc"/></g><g transform="translate(816,749.2) scale(1.18)"><rect x="0" y="0" width="8" height="7" rx="0.8" fill="url(#gMon)" stroke="#6a7ab8" stroke-width="0.5"/><rect x="2.4" y="7" width="3.2" height="1.4" fill="#b8c8ec"/><rect x="1" y="8.2" width="6" height="1.3" rx="0.5" fill="#e4ecfc"/></g>
<path d="M824.6 753.2 L831.6 760 M831.6 753.2 L824.6 760" stroke="#e82020" stroke-width="1.9"/>
<circle cx="839.6" cy="751.4" r="5.8" fill="#4a4e58"/><circle cx="839.2" cy="751" r="4" fill="#8a909c"/><circle cx="838.6" cy="750.4" r="1.8" fill="#d8dce4"/><path d="M843.4 757.6 L845.2 759.6 L848.4 753.4" stroke="#5a8ae8" stroke-width="1.1" fill="none"/>
<path d="M860 746 C864 744.8 868.6 748 868 753 C867.4 757.6 863 760.4 859.6 759.6 C855.6 760.4 852 757 852.4 752.6 C852.8 748 856.4 745.2 860 746 Z" fill="#5ec040"/>
<path d="M856.2 752.6 L859 755.6 L864.6 749.4" stroke="#fff" stroke-width="2.1" fill="none"/>
<rect x="874.6" y="748.4" width="6" height="5.6" fill="#58b040" stroke="#d8f0c0" stroke-width="1"/><rect x="876.6" y="750.2" width="2" height="2" fill="#a8e090"/>
<text x="877.6" y="759.6" font-family="Liberation Sans" font-weight="bold" font-size="6.6" text-anchor="middle" fill="#e0f4c8">qip</text>
<path d="M891.6 757.6 L897.6 747.2 L902.6 750 L896.6 760.6 Z" fill="#d4d8e0" stroke="#8a8e9a" stroke-width="0.5"/><path d="M895.4 752.6 L899.4 755" stroke="#9aa0ac" stroke-width="0.7"/><path d="M894 757.6 L895.6 759.6" stroke="#6a3a20" stroke-width="1.4"/>
<circle cx="892.2" cy="749" r="3.7" fill="#d01820"/><path d="M890.6 747.4 L893.8 750.6 M893.8 747.4 L890.6 750.6" stroke="#fff" stroke-width="1.1"/>
<circle cx="914" cy="752.6" r="7.2" fill="url(#gSil)" stroke="#6a78a0" stroke-width="0.6"/>
<path d="M915.6 746.6 L911 753.4 L913.8 753.4 L912 759 L917.4 751.4 L914.4 751.4 Z" fill="#2a3cc0"/>
<circle cx="932" cy="752.6" r="7.6" fill="url(#gOr)"/>
<path d="M935 750 A3.8 3.8 0 1 0 935.6 754.6" stroke="#fff" stroke-width="2.2" fill="none"/><path d="M933 748.2 L936.8 749.4 L934.6 752.2 Z" fill="#fff"/>
<circle cx="949.8" cy="752.6" r="7.2" fill="url(#gSw)"/>
<path d="M944.6 757 C946 752 950 752.6 951 749 C951.6 747 953.4 746.4 954.6 747.6" stroke="#5a86b8" stroke-width="2" fill="none" opacity=".8"/>
<path d="M961.6 754.6 L968.6 750.6 L973.4 754 L966.6 758.6 Z" fill="#8a94a4" stroke="#4a5464" stroke-width="0.6"/><path d="M961.6 754.6 L966.6 758.6 V760.6 L961.6 756.6 Z" fill="#5a6474"/><path d="M966.6 758.6 L973.4 754 V756 L966.6 760.6 Z" fill="#6a7484"/>
<path d="M962.4 746.4 L968 746.2 L966.6 748 L970 751.6 L967.4 753.4 L964.4 749.6 L962.6 751 Z" fill="#38b830" stroke="#1a7a18" stroke-width="0.4"/>
</svg>
<div class="abs" style="left:983.5px;top:746px;color:#fff;font-size:11px;line-height:14px;letter-spacing:-0.2px">15:06</div>
</body>
</html>
